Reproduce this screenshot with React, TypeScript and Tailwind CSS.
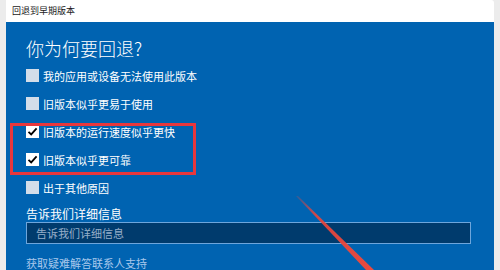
const font = { fontFamily: '"Noto Sans CJK SC", "Microsoft YaHei", sans-serif' };

const reasons = [
  { label: "我的应用或设备无法使用此版本", checked: false },
  { label: "旧版本似乎更易于使用", checked: false },
  { label: "旧版本的运行速度似乎更快", checked: true },
  { label: "旧版本似乎更可靠", checked: true },
  { label: "出于其他原因", checked: false },
];

const Check = ({ checked }: { checked: boolean }) => (
  <div
    className={
      "flex h-[13px] w-[13px] shrink-0 items-center justify-center " +
      (checked ? "bg-white" : "bg-[#d3dde9]")
    }
  >
    {checked && (
      <svg width="11" height="11" viewBox="0 0 11 11">
        <path d="M1.5 5.8 L4.2 8.4 L9.6 2.4" fill="none" stroke="#000" strokeWidth="1.8" />
      </svg>
    )}
  </div>
);

export default function App() {
  return (
    <div className="relative h-[270px] w-[500px] overflow-hidden bg-[#ececec]" style={font}>
      <div className="ml-[6px] w-[488px]">
        <div className="flex h-[22px] items-center rounded-tr-[3px] bg-white pl-[6px] text-[9px] text-[#1a1a1a]">
          回退到早期版本
        </div>
        <div className="flex h-[248px] flex-col bg-[#0063b1] pl-[20px] pr-[23px] pt-[14px] text-white">
          <h1 className="h-[27px] text-[18px] font-light leading-[24px]">你为何要回退?</h1>
          {reasons.map((r) => (
            <div key={r.label} className="flex h-[29px] items-center gap-[4px] text-[11px]">
              <Check checked={r.checked} />
              <span>{r.label}</span>
            </div>
          ))}
          <div className="mt-[4px] flex h-[16px] items-center text-[12px]">告诉我们详细信息</div>
          <div className="flex h-[23px] items-center border border-[#6ea6dc] bg-[#003b6d] pl-[9px] text-[11px] text-[#97afc9]">
            告诉我们详细信息
          </div>
          <div className="mt-[12px] h-[14px] text-[11px] leading-[14px] text-[#a9c8ec]">获取疑难解答联系人支持</div>
        </div>
      </div>

      <div className="absolute left-[10px] top-[123px] h-[52px] w-[186px] border-[3px] border-[#e8373c]" />

      <svg className="absolute left-0 top-0" width="500" height="270">
        <defs>
          <linearGradient id="ar" x1="0" y1="0" x2="1" y2="1">
            <stop offset="0" stopColor="#e8453c" stopOpacity="0.2" />
            <stop offset="0.25" stopColor="#e8453c" stopOpacity="0.9" />
            <stop offset="1" stopColor="#ea4a3e" />
          </linearGradient>
        </defs>
        <polygon points="296,196 298,196 374,270 366,270" fill="url(#ar)" />
      </svg>
    </div>
  );
}
